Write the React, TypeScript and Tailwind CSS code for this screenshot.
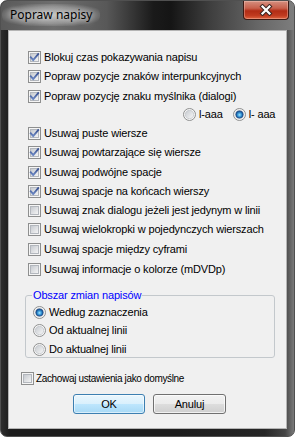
import React, { useId } from "react";

function useSafeId() {
  return useId().replace(/[^a-zA-Z0-9]/g, "");
}

function CheckBox({ checked }: { checked: boolean }) {
  const id = useSafeId();
  return (
    <svg width="13" height="13" viewBox="0 0 13 13" className="block shrink-0">
      <defs>
        <linearGradient id={`cg${id}`} x1="0" y1="0" x2="1" y2="1">
          <stop offset="0" stopColor="#c3c7cd" />
          <stop offset="1" stopColor="#f7f7f7" />
        </linearGradient>
        <linearGradient id={`ck${id}`} x1="0" y1="0" x2="0" y2="1">
          <stop offset="0" stopColor="#3d5594" />
          <stop offset="1" stopColor="#6a86c2" />
        </linearGradient>
      </defs>
      <rect x="0.5" y="0.5" width="12" height="12" fill="#f5f5f5" stroke="#8e8f8f" />
      <rect x="2.5" y="2.5" width="8" height="8" fill={`url(#cg${id})`} stroke="#b3b7bd" />
      {checked && (
        <path
          d="M2.8 6.4 L5.2 9 L10.2 3.2"
          fill="none"
          stroke={`url(#ck${id})`}
          strokeWidth="1.9"
          strokeLinecap="square"
        />
      )}
    </svg>
  );
}

function Radio({ checked }: { checked: boolean }) {
  const id = useSafeId();
  return (
    <svg width="13" height="13" viewBox="0 0 13 13" className="block shrink-0">
      <defs>
        <linearGradient id={`rg${id}`} x1="0" y1="0" x2="1" y2="1">
          <stop offset="0" stopColor="#c6cacf" />
          <stop offset="1" stopColor="#f8f8f8" />
        </linearGradient>
        <radialGradient id={`rd${id}`} cx="0.5" cy="0.55" r="0.55">
          <stop offset="0" stopColor="#a8e6ff" />
          <stop offset="0.45" stopColor="#3b9ddc" />
          <stop offset="1" stopColor="#0b3f82" />
        </radialGradient>
      </defs>
      <circle cx="6.5" cy="6.5" r="6" fill="#f5f5f5" stroke="#8e8f8f" />
      <circle cx="6.5" cy="6.5" r="4.2" fill={`url(#rg${id})`} stroke="#c0c3c8" strokeWidth="0.7" />
      {checked && (
        <circle cx="6.5" cy="6.5" r="3.6" fill={`url(#rd${id})`} stroke="#1b4c8c" strokeWidth="0.8" />
      )}
    </svg>
  );
}

type Row = { label: string; checked: boolean; h: string };

const rowsTop: Row[] = [
  { label: "Blokuj czas pokazywania napisu", checked: true, h: "h-[19px]" },
  { label: "Popraw pozycje znaków interpunkcyjnych", checked: true, h: "h-[20px]" },
  { label: "Popraw pozycję znaku myślnika (dialogi)", checked: true, h: "h-[18px]" },
];

const rowsBottom: Row[] = [
  { label: "Usuwaj puste wiersze", checked: true, h: "h-[19px]" },
  { label: "Usuwaj powtarzające się wiersze", checked: true, h: "h-[20px]" },
  { label: "Usuwaj podwójne spacje", checked: true, h: "h-[19px]" },
  { label: "Usuwaj spacje na końcach wierszy", checked: true, h: "h-[19px]" },
  { label: "Usuwaj znak dialogu jeżeli jest jedynym w linii", checked: false, h: "h-[19px]" },
  { label: "Usuwaj wielokropki w pojedynczych wierszach", checked: false, h: "h-[20px]" },
  { label: "Usuwaj spacje między cyframi", checked: false, h: "h-[20px]" },
  { label: "Usuwaj informacje o kolorze (mDVDp)", checked: false, h: "h-[13px]" },
];

function CheckRow({ row }: { row: Row }) {
  return (
    <div className={`flex items-start gap-[3px] ${row.h}`}>
      <CheckBox checked={row.checked} />
      <span className="whitespace-nowrap">{row.label}</span>
    </div>
  );
}

export default function App() {
  return (
    <div className="h-[437px] w-[295px] bg-white font-['Liberation_Sans',Arial,sans-serif] text-[11px] leading-[13px] tracking-[-0.15px] text-black">
      <div className="flex h-full w-full flex-col overflow-hidden rounded-[7px] border border-[#505050] bg-[linear-gradient(to_right,#2e2e2e_0%,#1c1c1c_3%,#1c1c1c_60%,#262626_90%,#454545_97%,#7a7a7a_100%)]">
        {/* Title bar */}
        <div className="flex h-[29px] shrink-0 items-start justify-between bg-[linear-gradient(to_right,#595959_0%,#6e6e6e_18%,#585858_36%,#1a1a1a_52%,#151515_58%,#404040_72%,#676767_88%,#7d7d7d_100%)]">
          <div className="ml-[1px] mt-[3px] rounded-[12px] bg-[radial-gradient(ellipse_at_center,rgba(255,255,255,0.55)_0%,rgba(255,255,255,0.25)_55%,rgba(255,255,255,0)_80%)] px-[8px] py-[2px]">
            <span className="font-['Noto_Sans','Open_Sans',sans-serif] text-[12px] leading-[18px] tracking-[0px] text-black [text-shadow:0_0_6px_rgba(255,255,255,0.9)]">
              Popraw napisy
            </span>
          </div>
          <div className="mr-[5px] flex h-[19px] w-[46px] items-center justify-center rounded-b-[4px] border border-t-0 border-[#3d1a14] bg-[linear-gradient(to_bottom,#d59080_0%,#c8604c_40%,#b22c15_55%,#c03a1f_80%,#de6440_100%)] shadow-[inset_0_0_0_1px_rgba(255,220,210,0.35)]">
            <svg width="14" height="12" viewBox="0 0 14 12">
              <path d="M3.5 2.5 L10.5 9.5 M10.5 2.5 L3.5 9.5" stroke="#3b2622" strokeWidth="4.2" strokeLinecap="square" />
              <path d="M3.5 2.5 L10.5 9.5 M10.5 2.5 L3.5 9.5" stroke="#ffffff" strokeWidth="2.2" strokeLinecap="square" />
            </svg>
          </div>
        </div>

        {/* Client area */}
        <div className="mx-[7px] flex h-[399px] shrink-0 flex-col border border-[#b4b4b4] bg-[#f0f0f0]">
          <div className="flex flex-col pl-[19px] pt-[20px]">
            {rowsTop.map((r) => (
              <CheckRow key={r.label} row={r} />
            ))}
            <div className="-ml-[19px] flex h-[19px] items-start pl-[174px]">
              <Radio checked={false} />
              <span className="ml-[3px] whitespace-nowrap">l-aaa</span>
              <span className="ml-[10px]">
                <Radio checked={true} />
              </span>
              <span className="ml-[3px] whitespace-nowrap">l- aaa</span>
            </div>
            {rowsBottom.map((r) => (
              <CheckRow key={r.label} row={r} />
            ))}
          </div>

          <fieldset className="ml-[16px] mt-[12px] w-[250px] rounded-[3px] border border-[#c3c8cc] pb-[1px]">
            <legend className="ml-[6px] px-[1px] leading-[14px] text-[#0000ff]">Obszar zmian napisów</legend>
            <div className="flex flex-col pl-[7px] pt-[4px]">
              <div className="flex h-[18px] items-start gap-[3px]">
                <Radio checked={true} />
                <span>Według zaznaczenia</span>
              </div>
              <div className="flex h-[19px] items-start gap-[3px]">
                <Radio checked={false} />
                <span>Od aktualnej linii</span>
              </div>
              <div className="flex h-[13px] items-start gap-[3px]">
                <Radio checked={false} />
                <span>Do aktualnej linii</span>
              </div>
            </div>
          </fieldset>

          <div className="ml-[12px] mt-[14px] flex h-[13px] items-center gap-[2px]">
            <CheckBox checked={false} />
            <span className="whitespace-nowrap text-[10px] leading-[13px] tracking-[-0.35px]">
              Zachowaj ustawienia jako domyślne
            </span>
          </div>

          <div className="mt-[9px] flex gap-[8px] pl-[64px]">
            <button className="flex h-[20px] w-[72px] items-center justify-center rounded-[3px] border border-[#3c7fb1] bg-[linear-gradient(to_bottom,#eaf6fd_0%,#d9f0fc_50%,#bee6fd_50%,#a7d9f5_100%)] shadow-[inset_0_0_0_1px_rgba(255,255,255,0.55)]">
              OK
            </button>
            <button className="flex h-[20px] w-[73px] items-center justify-center rounded-[3px] border border-[#707070] bg-[linear-gradient(to_bottom,#f2f2f2_0%,#ebebeb_50%,#dddddd_50%,#cfcfcf_100%)] shadow-[inset_0_0_0_1px_rgba(255,255,255,0.7)]">
              Anuluj
            </button>
          </div>
        </div>
      </div>
    </div>
  );
}
